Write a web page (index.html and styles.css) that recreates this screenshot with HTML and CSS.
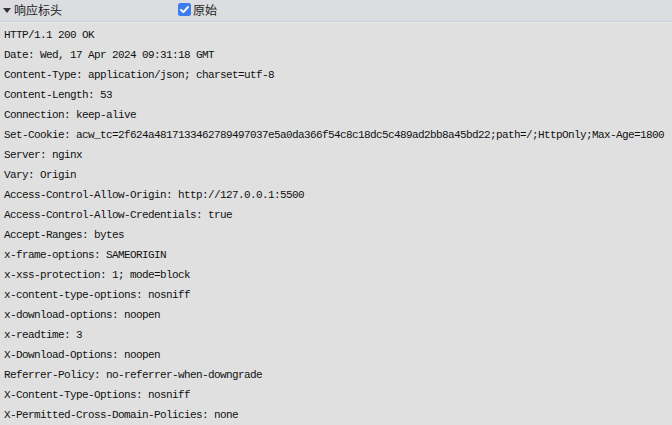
FILE: index.html
```html
<!DOCTYPE html>
<html>
<head>
<meta charset="utf-8">
<link rel="stylesheet" href="styles.css">
</head>
<body>
<div class="header">
  <div class="title"><span class="tri"></span><span>响应标头</span></div>
  <label class="raw"><span class="check"><svg width="13" height="13" viewBox="0 0 13 13"><rect x="0" y="0" width="13" height="13" rx="2.5" fill="#3c7cf0"/><path d="M3 6.8 L5.4 9.2 L10 4" fill="none" stroke="#fff" stroke-width="1.9" stroke-linecap="round" stroke-linejoin="round"/></svg></span><span>原始</span></label>
</div>
<div class="sep"></div>
<div class="lines">
  <div class="line">HTTP/1.1 200 OK</div>
  <div class="line">Date: Wed, 17 Apr 2024 09:31:18 GMT</div>
  <div class="line">Content-Type: application/json; charset=utf-8</div>
  <div class="line">Content-Length: 53</div>
  <div class="line">Connection: keep-alive</div>
  <div class="line">Set-Cookie: acw_tc=2f624a4817133462789497037e5a0da366f54c8c18dc5c489ad2bb8a45bd22;path=/;HttpOnly;Max-Age=1800</div>
  <div class="line">Server: nginx</div>
  <div class="line">Vary: Origin</div>
  <div class="line">Access-Control-Allow-Origin: http://127.0.0.1:5500</div>
  <div class="line">Access-Control-Allow-Credentials: true</div>
  <div class="line">Accept-Ranges: bytes</div>
  <div class="line">x-frame-options: SAMEORIGIN</div>
  <div class="line">x-xss-protection: 1; mode=block</div>
  <div class="line">x-content-type-options: nosniff</div>
  <div class="line">x-download-options: noopen</div>
  <div class="line">x-readtime: 3</div>
  <div class="line">X-Download-Options: noopen</div>
  <div class="line">Referrer-Policy: no-referrer-when-downgrade</div>
  <div class="line">X-Content-Type-Options: nosniff</div>
  <div class="line">X-Permitted-Cross-Domain-Policies: none</div>
</div>
</body>
</html>
```
FILE: styles.css
```css
html, body {
  margin: 0;
  padding: 0;
  background: #e0e0e0;
  overflow: hidden;
}
body {
  width: 672px;
  height: 425px;
}
.header {
  height: 19px;
  padding-bottom: 2px;
  background: #dcdde1;
  border-bottom: 1px solid #c9d3e6;
  display: flex;
  align-items: center;
  font-family: "Noto Sans CJK SC", "Noto Sans", sans-serif;
  font-size: 12px;
  color: #222;
}
.title {
  display: flex;
  align-items: center;
  width: 178px;
}
.tri {
  width: 0;
  height: 0;
  border-left: 4px solid transparent;
  border-right: 4px solid transparent;
  border-top: 5px solid #333;
  margin: 1px 3px 0 3px;
}
.raw {
  display: flex;
  align-items: center;
}
.check {
  display: flex;
  width: 13px;
  height: 13px;
  margin-right: 2px;
}
.sep {
  height: 1px;
  background: #ecebe0;
}
.lines {
  padding-top: 2px;
  padding-left: 4px;
  font-family: "Liberation Mono", monospace;
  font-size: 11px;
  letter-spacing: -0.6px;
  color: #111;
}
.line {
  height: 20px;
  line-height: 20px;
  white-space: nowrap;
}
```
